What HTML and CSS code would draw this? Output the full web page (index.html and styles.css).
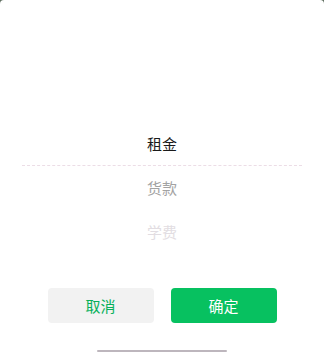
FILE: index.html
```html
<!DOCTYPE html>
<html lang="zh-CN">
<head>
<meta charset="utf-8">
<link rel="stylesheet" href="styles.css">
</head>
<body>
<div class="sheet">
  <div class="picker">
    <div class="row row-selected">租金</div>
    <div class="row row-near">货款</div>
    <div class="row row-far">学费</div>
  </div>
  <div class="actions">
    <button class="btn btn-cancel">取消</button>
    <button class="btn btn-ok">确定</button>
  </div>
  <div class="home-indicator"></div>
</div>
</body>
</html>
```
FILE: styles.css
```css
html, body {
  margin: 0;
  padding: 0;
  background: #5f6e60;
}
.sheet {
  width: 324px;
  height: 355px;
  background: #ffffff;
  border-radius: 4px 4px 0 0;
  font-family: "Noto Sans CJK SC", "Noto Sans", sans-serif;
  display: flex;
  flex-direction: column;
  align-items: center;
  overflow: hidden;
}
.picker {
  padding-top: 122px;
  width: 280px;
  display: flex;
  flex-direction: column;
}
.row {
  height: 44px;
  line-height: 44px;
  text-align: center;
  font-size: 15px;
  box-sizing: border-box;
}
.row-selected {
  color: #1a1a1a;
  border-bottom: 1px dashed #ecdde6;
  line-height: 43px;
}
.row-near {
  color: #a3a3a3;
}
.row-far {
  color: #e2dde2;
}
.actions {
  margin-top: 34px;
  display: flex;
  gap: 17px;
}
.btn {
  width: 106px;
  height: 35px;
  border: none;
  border-radius: 4px;
  font-family: "Noto Sans CJK SC", "Noto Sans", sans-serif;
  font-size: 15px;
  padding: 0;
}
.btn-cancel {
  background: #f2f2f2;
  color: #07b05a;
}
.btn-ok {
  background: #07c160;
  color: #ffffff;
}
.home-indicator {
  margin-top: 27px;
  width: 130px;
  height: 2px;
  border-radius: 1px;
  background: #bdb6bd;
}
```
